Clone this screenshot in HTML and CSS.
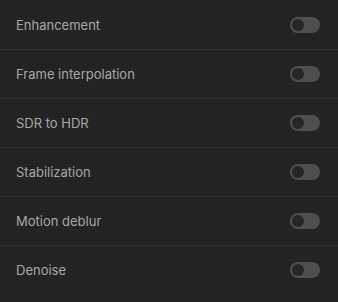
FILE: index.html
```html
<!DOCTYPE html>
<html lang="en">
<head>
    <meta charset="UTF-8" />
    <title>Video Options</title>
    <link rel="stylesheet" href="styles.css">
</head>
<body>

<!-- Options list -->
<ul class="options">
    <li class="option">
        <span class="option-label">Enhancement</span>
        <span class="toggle"><span class="knob"></span></span>
    </li>
    <li class="option">
        <span class="option-label">Frame interpolation</span>
        <span class="toggle"><span class="knob"></span></span>
    </li>
    <li class="option">
        <span class="option-label">SDR to HDR</span>
        <span class="toggle"><span class="knob"></span></span>
    </li>
    <li class="option">
        <span class="option-label">Stabilization</span>
        <span class="toggle"><span class="knob"></span></span>
    </li>
    <li class="option">
        <span class="option-label">Motion deblur</span>
        <span class="toggle"><span class="knob"></span></span>
    </li>
    <li class="option">
        <span class="option-label">Denoise</span>
        <span class="toggle"><span class="knob"></span></span>
    </li>
</ul>

</body>
</html>
```

FILE: styles.css
```css
body {
    margin: 0;
    padding: 0;
    background: #232323;
    font-family: 'Inter', 'Liberation Sans', sans-serif;
    color: #a8a8a8;
}

.options {
    list-style: none;
    margin: 0;
    padding: 1px 0 0;
}

.option {
    height: 48px;
    display: flex;
    align-items: center;
    justify-content: space-between;
    padding: 0 18px 0 16px;
    border-bottom: 1px solid #303030;
}

.option:last-child {
    border-bottom: none;
}

.option-label {
    font-size: 13px;
}

.toggle {
    width: 30px;
    height: 16px;
    border-radius: 8px;
    background: #4f4f4f;
    display: flex;
    align-items: center;
    padding: 0 2px;
    box-sizing: border-box;
}

.knob {
    width: 12px;
    height: 12px;
    border-radius: 50%;
    background: #262626;
}
```
